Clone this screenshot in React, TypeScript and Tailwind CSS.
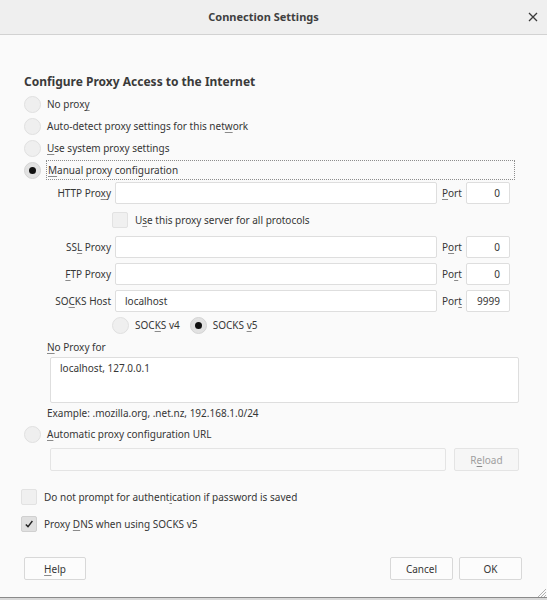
import React from "react";

const U = ({ children }: { children: React.ReactNode }) => (
  <span className="underline decoration-[#8a8a8a] underline-offset-[2px]">{children}</span>
);

const Radio = ({ checked = false }: { checked?: boolean }) => (
  <span
    className={
      "flex h-[17px] w-[17px] shrink-0 items-center justify-center rounded-full border " +
      (checked ? "border-[#d4d4d4] bg-[#e2e2e2]" : "border-[#e0e0e0] bg-[#efefef]")
    }
  >
    {checked && <span className="h-[7px] w-[7px] rounded-full bg-[#111]" />}
  </span>
);

const Check = ({ checked = false }: { checked?: boolean }) => (
  <span
    className={
      "flex h-[16px] w-[16px] shrink-0 items-center justify-center rounded-[2px] border " +
      (checked ? "border-[#d0d0d0] bg-[#e0e0e0]" : "border-[#e2e2e2] bg-[#f0f0f0]")
    }
  >
    {checked && (
      <svg width="10" height="10" viewBox="0 0 10 10">
        <path d="M1.8 5.4 L4 7.6 L8.4 2" fill="none" stroke="#222" strokeWidth="1.4" />
      </svg>
    )}
  </span>
);

const Input = ({ value = "", className = "", align = "left" }: { value?: string; className?: string; align?: string }) => (
  <div
    className={
      "flex h-[22px] items-center rounded-[2px] border border-[#dedede] bg-white " +
      (align === "right" ? "justify-end pr-[9px] " : "pl-[9px] ") +
      className
    }
  >
    {value}
  </div>
);

const ProxyRow = ({
  label,
  port,
  value = "",
  portValue,
}: {
  label: React.ReactNode;
  port: React.ReactNode;
  value?: string;
  portValue: string;
}) => (
  <div className="flex h-[22px] items-center">
    <div className="w-[64px] whitespace-nowrap text-right">{label}</div>
    <Input value={value} className="ml-[4px] w-[322px]" />
    <div className="ml-[5px] w-[24px] whitespace-nowrap">{port}</div>
    <Input value={portValue} align="right" className="w-[44px]" />
  </div>
);

export default function App() {
  return (
    <div
      className="flex h-[600px] w-[547px] flex-col bg-[#fafafa] text-[10px] leading-[18px] text-[#363636]"
      style={{ fontFamily: '"Noto Sans", "Open Sans", sans-serif' }}
    >
      <div className="flex h-[35px] shrink-0 items-center border-b border-[#d2d2d2] bg-[#efefef]">
        <div className="flex-1 pl-[4px] text-center text-[11px] font-bold text-[#404040]">Connection Settings</div>
        <div className="flex w-[24px] items-center justify-center pr-[4px]">
          <svg width="10" height="10" viewBox="0 0 10 10">
            <path d="M1 1 L9 9 M9 1 L1 9" stroke="#3a3a3a" strokeWidth="1.3" />
          </svg>
        </div>
      </div>

      <div className="flex flex-1 flex-col px-[24px] pt-[38px]">
        <div className="text-[12px] font-bold text-[#3a3a3a]">Configure Proxy Access to the Internet</div>
        <div className="mt-[4px] flex flex-col gap-[4px]">
          <div className="flex h-[18px] items-center gap-[6px]">
            <Radio />
            <span>No prox<U>y</U></span>
          </div>
          <div className="flex h-[18px] items-center gap-[6px]">
            <Radio />
            <span>Auto-detect proxy settings for this net<U>w</U>ork</span>
          </div>
          <div className="flex h-[18px] items-center gap-[6px]">
            <Radio />
            <span><U>U</U>se system proxy settings</span>
          </div>
          <div className="flex h-[18px] items-center gap-[5px]">
            <Radio checked />
            <span className="mr-[8px] flex h-[20px] flex-1 items-center border border-dotted border-[#8c8c8c] pl-[1px]">
              <span><U>M</U>anual proxy configuration</span>
            </span>
          </div>
        </div>

        <div className="ml-[23px] mt-[3px] flex flex-col gap-[5px]">
          <ProxyRow label={<>HTTP Pro<U>x</U>y</>} port={<><U>P</U>ort</>} portValue="0" />
          <div className="flex h-[22px] items-center pl-[65px]">
            <Check />
            <span className="ml-[7px]">U<U>s</U>e this proxy server for all protocols</span>
          </div>
          <ProxyRow label={<>SS<U>L</U> Proxy</>} port={<>P<U>o</U>rt</>} portValue="0" />
          <ProxyRow label={<><U>F</U>TP Proxy</>} port={<>Po<U>r</U>t</>} portValue="0" />
          <ProxyRow label={<>SO<U>C</U>KS Host</>} port={<>Por<U>t</U></>} value="localhost" portValue="9999" />
        </div>
        <div className="ml-[23px] mt-[4px] flex h-[18px] items-center pl-[65px]">
          <Radio />
          <span className="ml-[6px]">SOC<U>K</U>S v4</span>
          <span className="ml-[10px]"><Radio checked /></span>
          <span className="ml-[6px]">SOCKS <U>v</U>5</span>
        </div>

        <div className="ml-[23px] mt-[4px] flex flex-col">
          <div><U>N</U>o Proxy for</div>
          <div className="ml-[3px] mt-[1px] h-[46px] w-[469px] rounded-[2px] border border-[#dedede] bg-white px-[9px] pt-[1px]">
            localhost, 127.0.0.1
          </div>
          <div className="mt-[1px]">Example: .mozilla.org, .net.nz, 192.168.1.0/24</div>
        </div>

        <div className="mt-[3px] flex h-[18px] items-center gap-[6px]">
          <Radio />
          <span><U>A</U>utomatic proxy configuration URL</span>
        </div>
        <div className="ml-[26px] mt-[5px] flex h-[23px] items-center gap-[8px]">
          <div className="h-[23px] w-[396px] rounded-[2px] border border-[#e4e4e4] bg-[#fafafa]" />
          <div className="flex h-[23px] w-[65px] items-center justify-center rounded-[2px] border border-[#e4e4e4] bg-[#f6f6f6] text-[#a0a0a0]">
            R<U>e</U>load
          </div>
        </div>

        <div className="-ml-[3px] mt-[18px] flex flex-col gap-[11px]">
          <div className="flex h-[16px] items-center">
            <Check />
            <span className="ml-[7px]">Do not prompt for authent<U>i</U>cation if password is saved</span>
          </div>
          <div className="flex h-[16px] items-center">
            <Check checked />
            <span className="ml-[7px]">Proxy <U>D</U>NS when using SOCKS v5</span>
          </div>
        </div>

        <div className="mt-[25px] flex items-center">
          <div className="flex h-[23px] w-[62px] items-center justify-center rounded-[2px] border border-[#d8d8d8] bg-[#fcfcfc]">
            <U>H</U>elp
          </div>
          <div className="flex-1" />
          <div className="flex h-[23px] w-[63px] items-center justify-center rounded-[2px] border border-[#d8d8d8] bg-[#fcfcfc]">
            Cancel
          </div>
          <div className="ml-[6px] mr-[1px] flex h-[23px] w-[63px] items-center justify-center rounded-[2px] border border-[#d8d8d8] bg-[#fcfcfc]">
            OK
          </div>
        </div>
      </div>
      <div className="relative h-[3px] shrink-0 border-t border-[#8a8a8a] bg-[#d8d8d8]">
        <svg className="absolute bottom-[2px] right-0" width="12" height="12" viewBox="0 0 12 12">
          <path d="M11 3 L3 11 M11 6 L6 11 M11 9 L9 11" stroke="#b0b0b0" strokeWidth="1" />
        </svg>
      </div>
    </div>
  );
}
